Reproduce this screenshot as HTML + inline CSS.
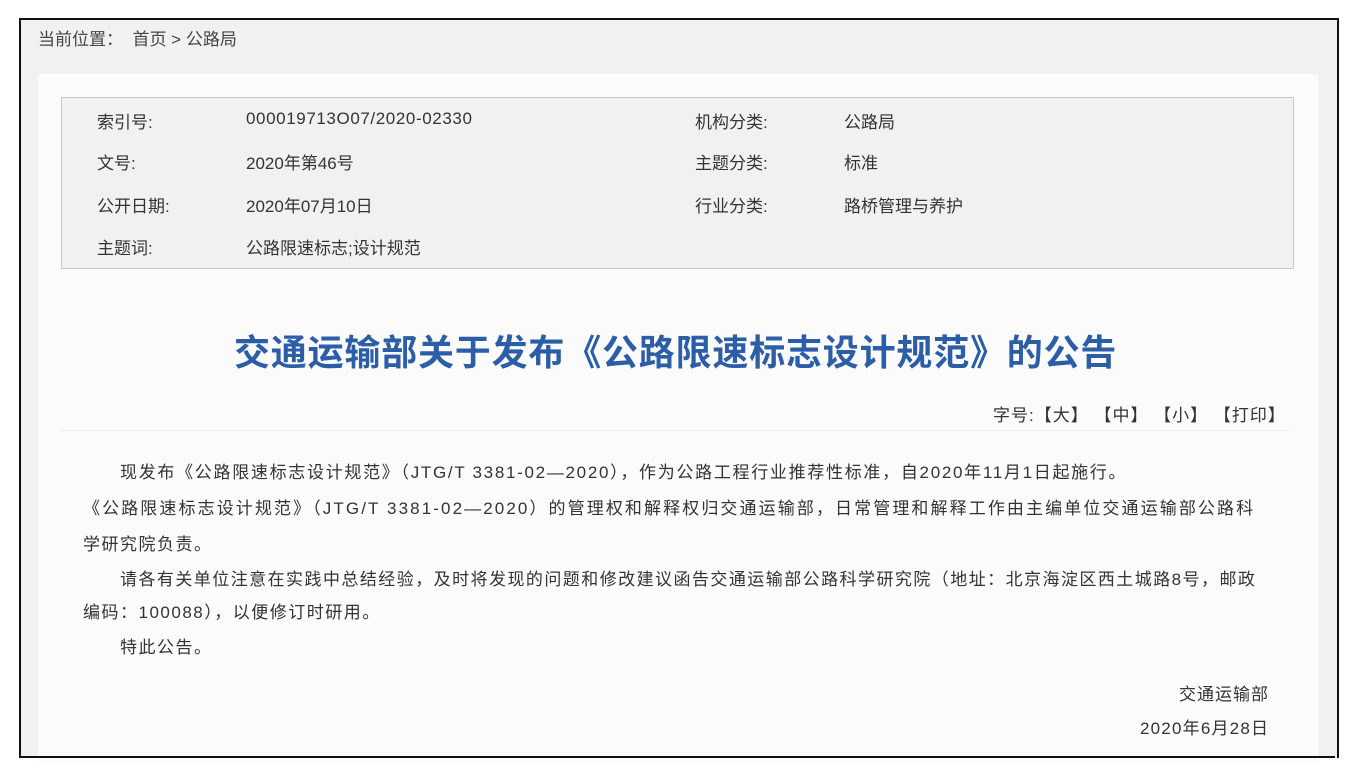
<!DOCTYPE html>
<html><head><meta charset="utf-8"><style>
body{margin:0;width:1360px;height:778px;background:#fff;position:relative;overflow:hidden;font-family:"Liberation Sans","Noto Sans CJK SC",sans-serif;color:#333}
.frame{position:absolute;left:19px;top:18px;width:1316px;height:738px;border:2px solid #111;border-bottom:none;background:#f1f1f2}
.a{position:absolute;white-space:nowrap}
.card{position:absolute;left:38px;top:74px;width:1280px;height:690px;background:#fbfbfc}
.info{position:absolute;left:61px;top:97px;width:1231px;height:170px;background:#f1f1f4;border:1px solid #c8c8cc}
.f{font-size:17px;color:#333}
.p{font-size:17px;color:#333}
</style></head><body>
<div class="frame"></div>
<div class="a f" style="left:38px;top:25px;color:#444">当前位置：&nbsp;&nbsp;首页 &gt; 公路局</div>
<div class="card"></div>
<div class="info"></div>
<div class="a f" style="left:97px;top:108px">索引号:</div>
<div class="a f" style="left:246px;top:109px;letter-spacing:0.6px">000019713O07/2020-02330</div>
<div class="a f" style="left:97px;top:149px">文号:</div>
<div class="a f" style="left:246px;top:149px">2020年第46号</div>
<div class="a f" style="left:97px;top:192px">公开日期:</div>
<div class="a f" style="left:246px;top:192px">2020年07月10日</div>
<div class="a f" style="left:97px;top:234px">主题词:</div>
<div class="a f" style="left:246px;top:234px">公路限速标志;设计规范</div>
<div class="a f" style="left:695px;top:108px">机构分类:</div>
<div class="a f" style="left:844px;top:108px">公路局</div>
<div class="a f" style="left:695px;top:149px">主题分类:</div>
<div class="a f" style="left:844px;top:149px">标准</div>
<div class="a f" style="left:695px;top:192px">行业分类:</div>
<div class="a f" style="left:844px;top:192px">路桥管理与养护</div>
<div class="a" style="left:234px;top:324px;font-size:36px;font-weight:bold;color:#2c5ea8;letter-spacing:0.8px">交通运输部关于发布《公路限速标志设计规范》的公告</div>
<div class="a f" style="left:993px;top:401px;letter-spacing:1px">字号:【大】 【中】 【小】 【打印】</div>
<div class="a" style="left:60px;top:430px;width:1230px;height:1px;background:#ececee"></div>
<div class="a p" style="left:120px;top:458px;letter-spacing:1.7px">现发布《公路限速标志设计规范》（JTG/T 3381-02—2020），作为公路工程行业推荐性标准，自2020年11月1日起施行。</div>
<div class="a p" style="left:83px;top:494px;letter-spacing:2.1px">《公路限速标志设计规范》（JTG/T 3381-02—2020）的管理权和解释权归交通运输部，日常管理和解释工作由主编单位交通运输部公路科</div>
<div class="a p" style="left:83px;top:530px;letter-spacing:1.5px">学研究院负责。</div>
<div class="a p" style="left:120px;top:565px;letter-spacing:1.45px">请各有关单位注意在实践中总结经验，及时将发现的问题和修改建议函告交通运输部公路科学研究院（地址：北京海淀区西土城路8号，邮政</div>
<div class="a p" style="left:83px;top:598px;letter-spacing:1.5px">编码：100088），以便修订时研用。</div>
<div class="a p" style="left:120px;top:633px;letter-spacing:1.5px">特此公告。</div>
<div class="a p" style="left:1179px;top:680px;letter-spacing:1px">交通运输部</div>
<div class="a p" style="left:1140px;top:714px;letter-spacing:1.2px">2020年6月28日</div>
<div class="a" style="left:19px;top:756px;width:1316px;height:2px;background:#111"></div>
</body></html>
